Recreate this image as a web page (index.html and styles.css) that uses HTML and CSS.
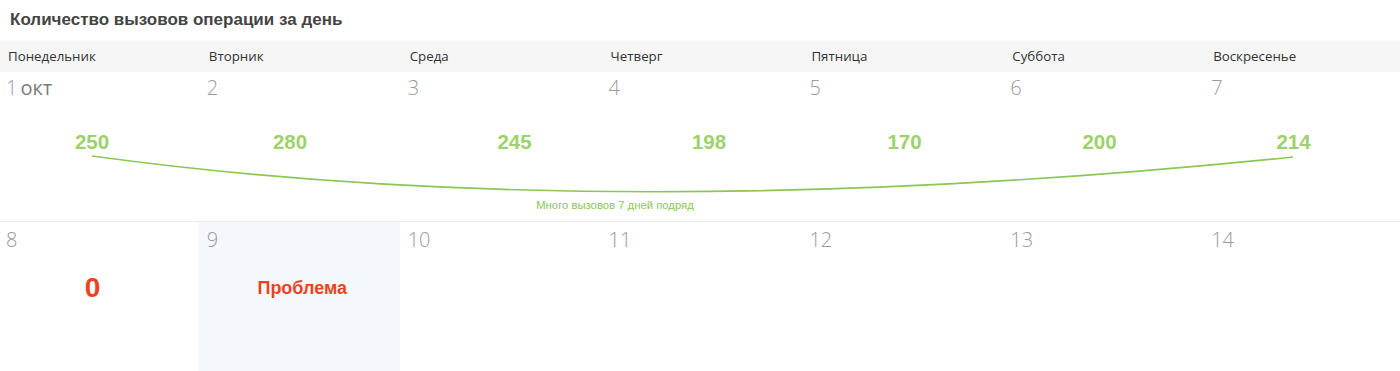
FILE: index.html
```html
<!DOCTYPE html>
<html lang="ru">
<head>
<meta charset="utf-8">
<title>Календарь вызовов</title>
<link rel="stylesheet" href="styles.css">
</head>
<body>
<div class="page">
  <h1 class="title">Количество вызовов операции за день</h1>
  <div class="frame">
    <div class="calendar">
      <div class="weekdays">
        <div class="wd">Понедельник</div>
        <div class="wd">Вторник</div>
        <div class="wd">Среда</div>
        <div class="wd">Четверг</div>
        <div class="wd">Пятница</div>
        <div class="wd">Суббота</div>
        <div class="wd">Воскресенье</div>
      </div>
      <div class="week week-first">
        <div class="day"><span class="num">1</span><span class="month">окт</span></div>
        <div class="day"><span class="num">2</span></div>
        <div class="day"><span class="num">3</span></div>
        <div class="day"><span class="num">4</span></div>
        <div class="day"><span class="num">5</span></div>
        <div class="day"><span class="num">6</span></div>
        <div class="day"><span class="num">7</span></div>
        <svg class="trend" width="1406" height="149" viewBox="-2 72 1406 149" xmlns="http://www.w3.org/2000/svg">
          <path class="trend-line" d="M92 156 Q 610 227 1293 157"/>
          <text class="val" x="92" y="149">250</text>
          <text class="val" x="290" y="149">280</text>
          <text class="val" x="514.5" y="149">245</text>
          <text class="val" x="709" y="149">198</text>
          <text class="val" x="904.5" y="149">170</text>
          <text class="val" x="1099.5" y="149">200</text>
          <text class="val" x="1293.5" y="149">214</text>
          <text class="note" x="615" y="209">Много вызовов 7 дней подряд</text>
        </svg>
      </div>
      <div class="week">
        <div class="day"><span class="num">8</span><div class="zero">0</div></div>
        <div class="day day-problem"><span class="num">9</span><div class="problem">Проблема</div></div>
        <div class="day"><span class="num">10</span></div>
        <div class="day"><span class="num">11</span></div>
        <div class="day"><span class="num">12</span></div>
        <div class="day"><span class="num">13</span></div>
        <div class="day"><span class="num">14</span></div>
      </div>
    </div>
  </div>
</div>
</body>
</html>
```

FILE: styles.css
```css
html, body {
  margin: 0;
  padding: 0;
  background: #ffffff;
}
body {
  font-family: "Open Sans", "Liberation Sans", sans-serif;
  overflow: hidden;
}
.page {
  width: 1400px;
  height: 371px;
  overflow: hidden;
}
.title {
  margin: 0;
  height: 41px;
  box-sizing: border-box;
  padding: 10px 0 0 10px;
  font-family: "Liberation Sans", Arial, sans-serif;
  font-size: 17px;
  font-weight: bold;
  line-height: 20px;
  color: #444444;
}
.frame {
  width: 1400px;
  overflow: hidden;
}
.calendar {
  width: 1406px;
  margin-left: -2px;
}
.weekdays {
  display: grid;
  grid-template-columns: repeat(7, minmax(0, 1fr));
  height: 31px;
  background: #f6f6f6;
}
.wd {
  padding: 7px 0 0 10px;
  font-size: 13.3px;
  line-height: 17px;
  color: #333333;
}
.week {
  display: grid;
  grid-template-columns: repeat(7, minmax(0, 1fr));
  grid-template-rows: 149px;
}
.week-first {
  border-bottom: 1px solid #ececec;
}
.day {
  grid-row: 1;
  min-width: 0;
  padding: 1px 0 0 8px;
  font-weight: 300;
  font-size: 20px;
  line-height: 30px;
  color: #9a9a9a;
}
.week .day:nth-child(1) { grid-column: 1; }
.week .day:nth-child(2) { grid-column: 2; }
.week .day:nth-child(3) { grid-column: 3; }
.week .day:nth-child(4) { grid-column: 4; }
.week .day:nth-child(5) { grid-column: 5; }
.week .day:nth-child(6) { grid-column: 6; }
.week .day:nth-child(7) { grid-column: 7; }
.week:not(.week-first) .day {
  padding-top: 3px;
}
.month {
  margin-left: 3px;
  color: #7a7a7a;
  font-weight: 400;
}
.trend {
  grid-row: 1;
  grid-column: 1 / -1;
  display: block;
  pointer-events: none;
}
.trend-line {
  fill: none;
  stroke: #8cc653;
  stroke-width: 1.6;
}
.val {
  font-family: "Liberation Sans", Arial, sans-serif;
  font-weight: bold;
  font-size: 20.5px;
  fill: #9dd16b;
  text-anchor: middle;
}
.note {
  font-family: "Liberation Sans", Arial, sans-serif;
  font-size: 11.3px;
  fill: #8cc653;
  text-anchor: middle;
}
.day-problem {
  background: #f4f7fc;
}
.zero {
  margin: 17px 0 0 -8px;
  padding-right: 12px;
  text-align: center;
  font-family: "Liberation Sans", Arial, sans-serif;
  font-weight: bold;
  font-size: 28px;
  line-height: 32px;
  color: #ea4320;
}
.problem {
  margin: 22px 0 0 -8px;
  padding-left: 6px;
  text-align: center;
  font-family: "Liberation Sans", Arial, sans-serif;
  font-weight: bold;
  font-size: 18px;
  line-height: 22px;
  color: #ea4320;
}
```
